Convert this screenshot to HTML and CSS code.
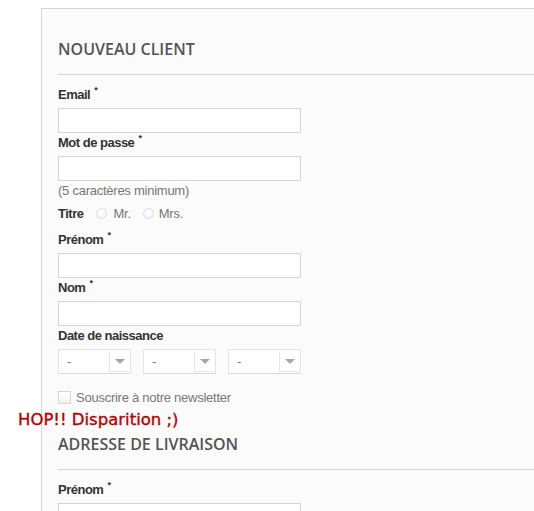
FILE: index.html
```html
<!DOCTYPE html>
<html lang="fr">
<head>
<meta charset="utf-8">
<title>Nouveau client</title>
<link rel="stylesheet" href="styles.css">
</head>
<body>
<div class="page">
  <form class="box">
    <h3 class="subheading">Nouveau client</h3>

    <div class="group">
      <label class="label">Email <sup>*</sup></label>
      <div class="input"></div>
    </div>

    <div class="group">
      <label class="label">Mot de passe <sup>*</sup></label>
      <div class="input"></div>
      <p class="hint">(5 caractères minimum)</p>
    </div>

    <div class="titre">
      <span class="label-inline">Titre</span>
      <span class="radio"></span><span class="opt">Mr.</span>
      <span class="radio radio-2"></span><span class="opt">Mrs.</span>
    </div>

    <div class="group">
      <label class="label">Prénom <sup>*</sup></label>
      <div class="input"></div>
    </div>

    <div class="group">
      <label class="label">Nom <sup>*</sup></label>
      <div class="input"></div>
    </div>

    <div class="group">
      <label class="label">Date de naissance</label>
      <div class="selects">
        <div class="select"><span class="sel-text">-</span><span class="sel-arrow"><span class="tri"></span></span></div>
        <div class="select"><span class="sel-text">-</span><span class="sel-arrow"><span class="tri"></span></span></div>
        <div class="select"><span class="sel-text">-</span><span class="sel-arrow"><span class="tri"></span></span></div>
      </div>
    </div>

    <div class="newsletter">
      <span class="checkbox"></span>
      <span class="opt">Souscrire à notre newsletter</span>
    </div>

    <p class="hop">HOP!! Disparition ;)</p>

    <h3 class="subheading subheading-2">Adresse de livraison</h3>

    <div class="group">
      <label class="label">Prénom <sup>*</sup></label>
      <div class="input"></div>
    </div>
  </form>
</div>
</body>
</html>
```

FILE: styles.css
```css
html, body {
  margin: 0;
  padding: 0;
  background: #ffffff;
  overflow: hidden;
}

.page {
  padding: 8px 0 0 41px;
  height: 503px;
}

.box {
  width: 560px;
  min-height: 520px;
  background: #fbfbfb;
  border: 1px solid #d6d4d4;
  padding: 29px 0 0 16px;
  box-sizing: border-box;
  font-family: "Liberation Sans", Arial, sans-serif;
  font-size: 13px;
  letter-spacing: -0.25px;
  color: #333333;
}

.subheading {
  margin: 0 0 10px 0;
  padding: 0 0 13px 0;
  border-bottom: 1px solid #d6d4d4;
  font-family: "Open Sans", "DejaVu Sans", sans-serif;
  font-weight: 600;
  font-size: 16px;
  line-height: 23px;
  letter-spacing: 0;
  text-transform: uppercase;
  color: #555454;
}

.subheading-2 {
  margin-top: 4px;
}

.group {
  display: flex;
  flex-direction: column;
  width: 243px;
}

.label {
  display: block;
  font-weight: bold;
  line-height: 19px;
  letter-spacing: -0.5px;
  margin-bottom: 4px;
  color: #333333;
}

.label sup {
  font-size: 9px;
  line-height: 0;
  position: relative;
  top: -1px;
  vertical-align: super;
  margin-left: 1px;
}

.input {
  height: 25px;
  box-sizing: border-box;
  background: #ffffff;
  border: 1px solid #d6d4d4;
}

.hint {
  margin: 0;
  line-height: 19px;
  color: #777777;
}

.titre {
  display: flex;
  align-items: center;
  padding: 4px 0 7px 0;
  line-height: 19px;
}

.label-inline {
  font-weight: bold;
  letter-spacing: -0.5px;
  color: #333333;
  margin-right: 13px;
}

.radio {
  width: 11px;
  height: 11px;
  box-sizing: border-box;
  border-radius: 50%;
  border: 1px solid #dedede;
  background: radial-gradient(circle at 50% 40%, #ffffff 0%, #f6f6f6 70%, #ebebeb 100%);
  margin-right: 6px;
}

.radio-2 {
  margin-left: 12px;
  margin-right: 5px;
}

.opt {
  color: #777777;
}

.selects {
  display: grid;
  grid-template-columns: repeat(3, 73px);
  column-gap: 12px;
}

.select {
  height: 25px;
  box-sizing: border-box;
  display: flex;
  align-items: center;
  justify-content: space-between;
  background: #ffffff;
  border: 1px solid #e4e4e4;
  border-bottom-color: #d9d9d9;
  padding: 0 1px 0 8px;
  color: #777777;
}

.sel-arrow {
  width: 20px;
  height: 20px;
  box-sizing: border-box;
  display: flex;
  align-items: center;
  justify-content: center;
  background: #ffffff;
  border-left: 1px solid #e6e6e6;
  border-bottom: 1px solid #e6e6e6;
}

.tri {
  width: 0;
  height: 0;
  border-left: 5px solid transparent;
  border-right: 5px solid transparent;
  border-top: 5px solid #a8a8a8;
}

.newsletter {
  display: flex;
  align-items: center;
  margin-top: 14px;
  line-height: 19px;
}

.checkbox {
  width: 13px;
  height: 13px;
  box-sizing: border-box;
  border: 1px solid #d6d4d4;
  background: linear-gradient(#ffffff, #f2f2f2);
  margin-right: 5px;
}

.hop {
  margin: 3px 0 0 -40px;
  font-family: "DejaVu Sans", Verdana, sans-serif;
  font-size: 16.5px;
  line-height: 19px;
  letter-spacing: 0;
  color: #b40000;
  -webkit-text-stroke: 0.35px #b40000;
}
```
